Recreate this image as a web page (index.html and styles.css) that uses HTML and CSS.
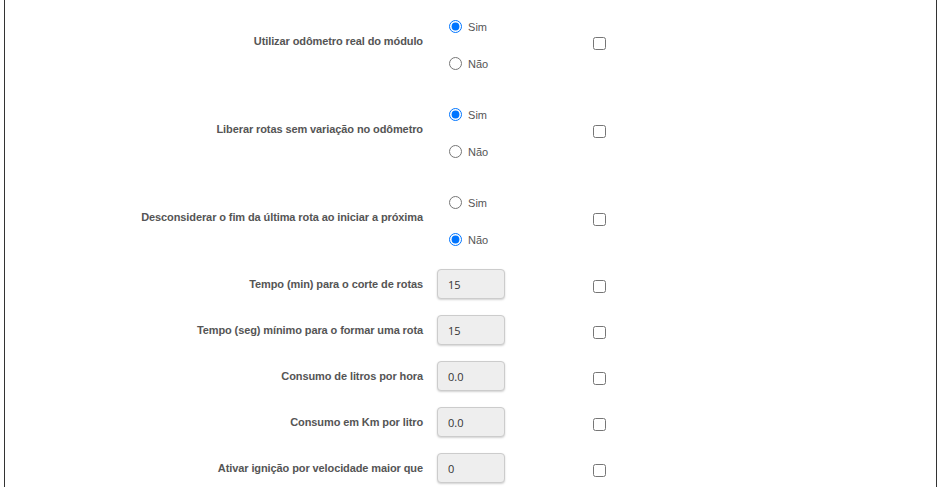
FILE: index.html
```html
<!DOCTYPE html>
<html lang="pt-BR">
<head>
<meta charset="utf-8">
<title>Configurações</title>
<link rel="stylesheet" href="styles.css">
</head>
<body>
<div class="frame">
  <div class="form">
    <div class="row row-radio">
      <div class="label">Utilizar odômetro real do módulo</div>
      <div class="value radios">
        <label class="opt"><input type="radio" name="r1" checked> Sim</label>
        <label class="opt"><input type="radio" name="r1"> Não</label>
      </div>
      <div class="check"><input type="checkbox"></div>
    </div>
    <div class="row row-radio">
      <div class="label">Liberar rotas sem variação no odômetro</div>
      <div class="value radios">
        <label class="opt"><input type="radio" name="r2" checked> Sim</label>
        <label class="opt"><input type="radio" name="r2"> Não</label>
      </div>
      <div class="check"><input type="checkbox"></div>
    </div>
    <div class="row row-radio">
      <div class="label">Desconsiderar o fim da última rota ao iniciar a próxima</div>
      <div class="value radios">
        <label class="opt"><input type="radio" name="r3"> Sim</label>
        <label class="opt"><input type="radio" name="r3" checked> Não</label>
      </div>
      <div class="check"><input type="checkbox"></div>
    </div>
    <div class="row row-input">
      <div class="label">Tempo (min) para o corte de rotas</div>
      <div class="value"><input class="field" type="text" value="15"></div>
      <div class="check"><input type="checkbox"></div>
    </div>
    <div class="row row-input">
      <div class="label">Tempo (seg) mínimo para o formar uma rota</div>
      <div class="value"><input class="field" type="text" value="15"></div>
      <div class="check"><input type="checkbox"></div>
    </div>
    <div class="row row-input">
      <div class="label">Consumo de litros por hora</div>
      <div class="value"><input class="field" type="text" value="0.0"></div>
      <div class="check"><input type="checkbox"></div>
    </div>
    <div class="row row-input">
      <div class="label">Consumo em Km por litro</div>
      <div class="value"><input class="field" type="text" value="0.0"></div>
      <div class="check"><input type="checkbox"></div>
    </div>
    <div class="row row-input">
      <div class="label">Ativar ignição por velocidade maior que</div>
      <div class="value"><input class="field" type="text" value="0"></div>
      <div class="check"><input type="checkbox"></div>
    </div>
  </div>
</div>
</body>
</html>
```

FILE: styles.css
```css
html, body {
  margin: 0;
  padding: 0;
  background: #fff;
  height: 100%;
  overflow: hidden;
}

.frame {
  margin: 0 2px 0 4px;
  border-left: 1px solid #333;
  border-right: 1px solid #333;
  height: 100%;
  box-sizing: border-box;
}

.form {
  margin-top: -3px;
  font-family: "Liberation Sans", Arial, sans-serif;
  font-size: 11px;
  color: #555;
}

.row {
  display: grid;
  grid-template-columns: 418px 138px 40px;
  column-gap: 14px;
  align-items: center;
}

.row-radio {
  height: 88px;
}

.row-input {
  height: 46px;
}

.label {
  text-align: right;
  font-weight: bold;
  letter-spacing: -0.1px;
  padding-bottom: 1px;
}

.radios {
  display: flex;
  flex-direction: column;
  gap: 15px;
  padding-top: 8px;
  padding-left: 7px;
}

.opt {
  display: flex;
  align-items: center;
  height: 22px;
  white-space: pre;
  font-size: 11px;
  color: #555;
}

.opt input {
  margin: 0 3px 0 5px;
  width: 13px;
  height: 13px;
}

.field {
  box-sizing: border-box;
  width: 68px;
  height: 30px;
  padding: 0 10px;
  border: 1px solid #ccc;
  border-radius: 4px;
  background: #eee;
  box-shadow: 0 1px 2px rgba(0, 0, 0, 0.18);
  font-family: "Open Sans", "Liberation Sans", sans-serif;
  font-size: 11px;
  color: #333;
  outline: none;
}

.check input {
  margin: 6px 0 0 4px;
  width: 13px;
  height: 13px;
}
```
